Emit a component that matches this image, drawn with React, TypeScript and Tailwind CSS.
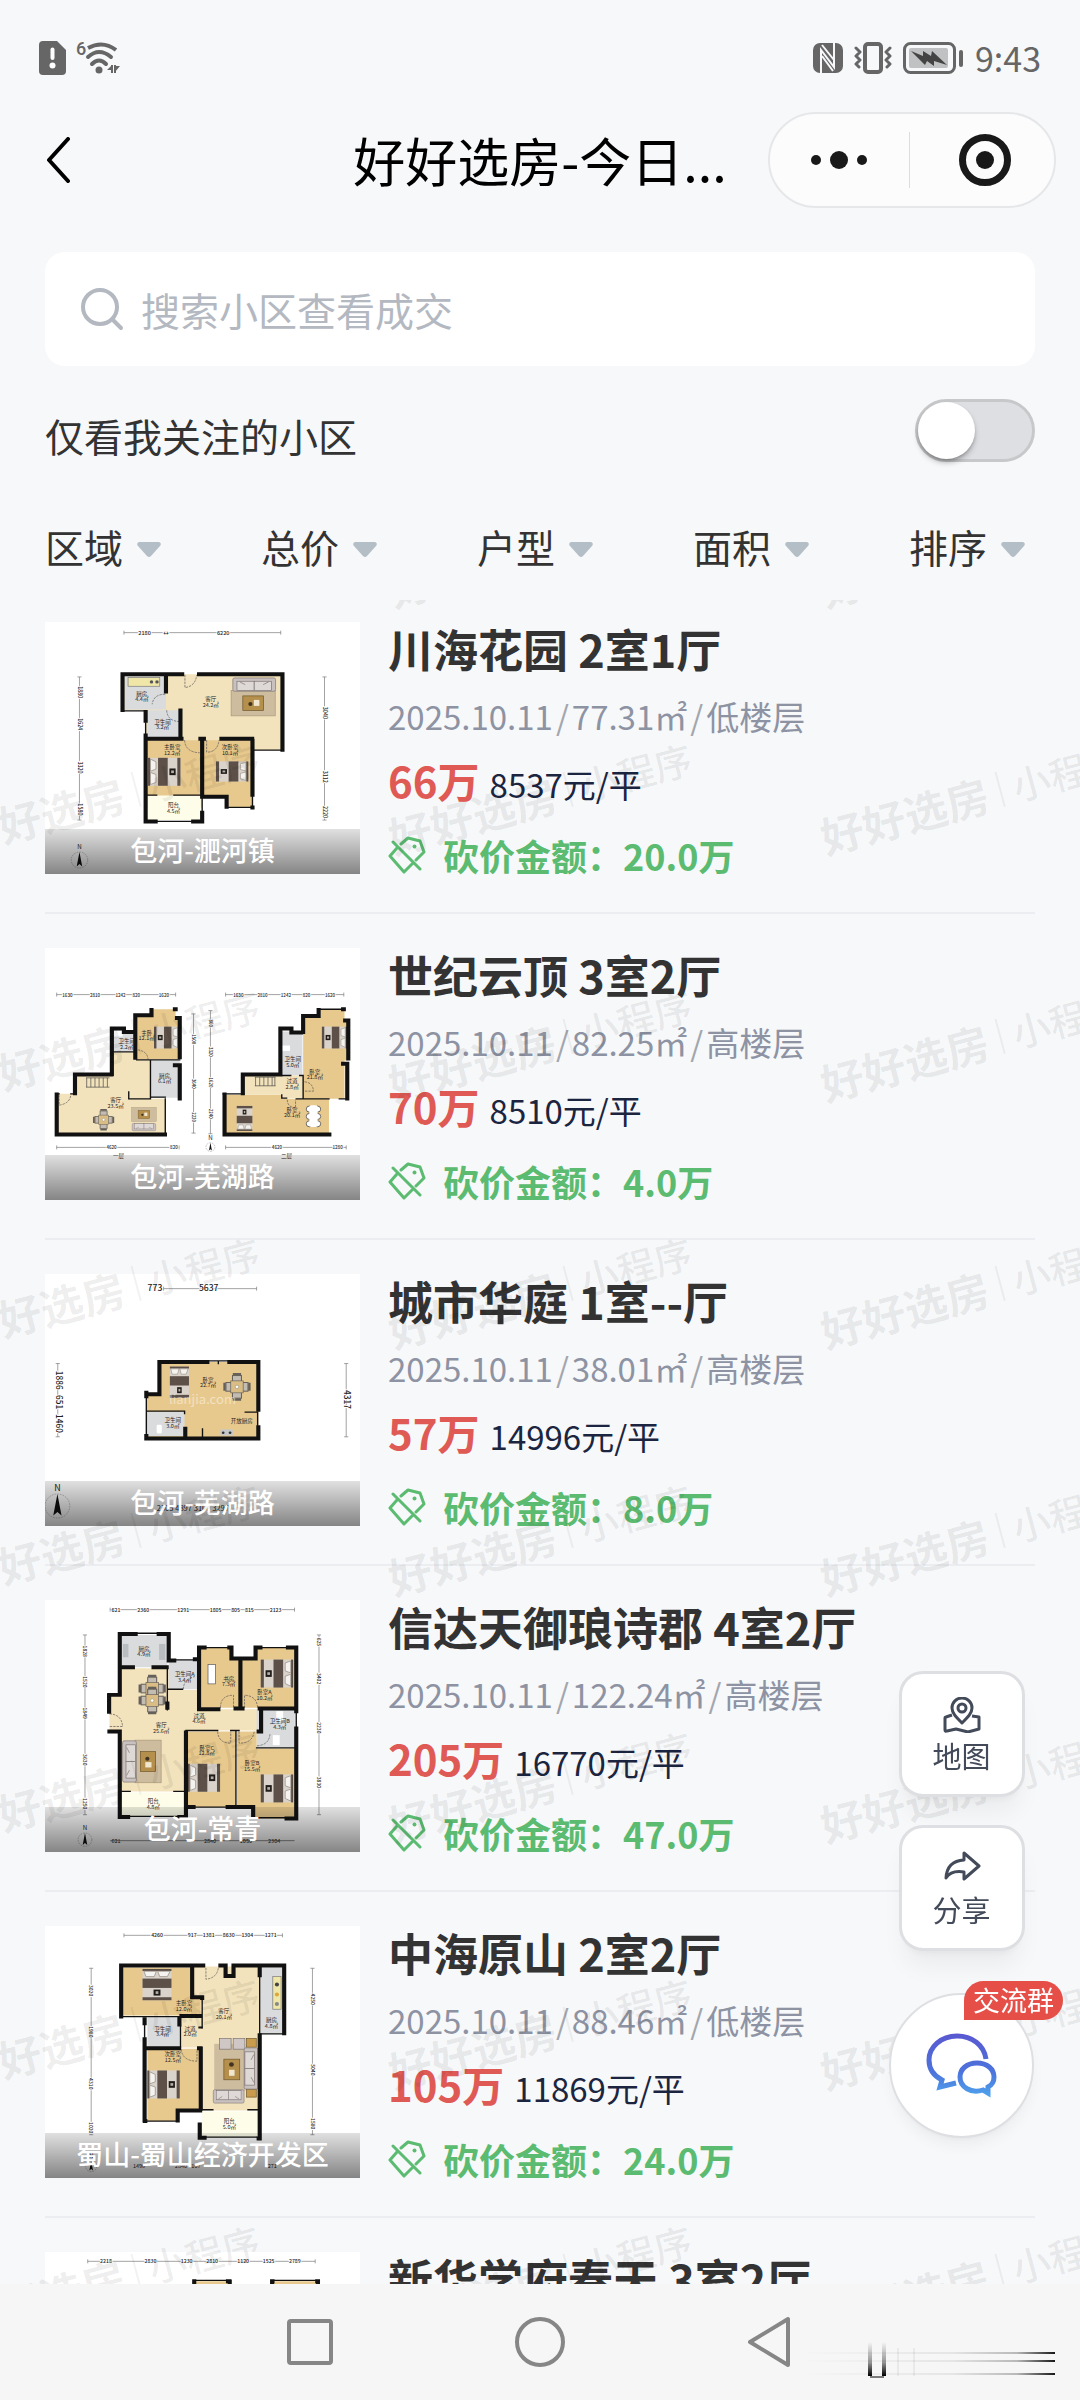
import { useState } from "react";
import type { ReactNode } from "react";

interface Listing {
  name: string;
  layout: string;
  date: string;
  size: string;
  floor: string;
  total: string;
  unit: string;
  cut: string;
  district: string;
  plan: ReactNode;
}

const WOOD = "#e8c98d";
const TILE = "#f3e3bc";
const STONE = "#d9dbdd";
const BALCONY = "#fdfdea";
const WALL = "#111111";

function Plan({ viewBox, children }: { viewBox: string; children: ReactNode }) {
  return (
    <svg
      viewBox={viewBox}
      preserveAspectRatio="none"
      className="block h-full w-full"
      fontFamily="'Noto Sans CJK SC', sans-serif"
      fontSize="16"
      textAnchor="middle"
      fill="#222222"
    >
      {children}
    </svg>
  );
}

function Walls({ thick, thin }: { thick: string; thin?: string }) {
  return (
    <g fill="none" stroke={WALL} strokeLinecap="square">
      {thin && <path d={thin} strokeWidth="4" />}
      <path d={thick} strokeWidth="12" strokeLinecap="butt" />
    </g>
  );
}

function Label({ x, y, name, area }: { x: number; y: number; name: string; area?: string }) {
  return (
    <>
      <text x={x} y={y}>{name}</text>
      {area && <text x={x} y={y + 17}>{area}</text>}
    </>
  );
}

// Bed drawn with its head to the left, 94 x 84, turned around its centre
function Bed({ x, y, turn = 0 }: { x: number; y: number; turn?: number }) {
  return (
    <g transform={`translate(${x} ${y}) rotate(${turn})`}>
      <rect x="-47" y="-42" width="94" height="84" fill="#d9d3cb" />
      <rect x="-47" y="-42" width="6" height="84" fill="#5b4e45" />
      <path d="M-40 -38 L-24 -30 L-24 -8 L-40 -2 Z M-40 2 L-24 8 L-24 32 L-40 38 Z" fill="#f5f3ef" stroke="#8d857c" strokeWidth="2" />
      <rect x="-18" y="-42" width="28" height="84" fill="#5c5048" />
      <rect x="38" y="-42" width="9" height="84" fill="#5c5048" />
      <rect x="15" y="-10" width="18" height="20" fill="#1f1c1a" />
      <rect x="20" y="-4" width="8" height="8" fill="#b8b0a5" />
    </g>
  );
}

// Sofa with its back at the top
function Sofa({ x, y, turn = 0 }: { x: number; y: number; turn?: number }) {
  return (
    <g transform={`translate(${x} ${y}) rotate(${turn})`} stroke="#7b7270" strokeWidth="2">
      <rect x="-62" y="-20" width="124" height="40" rx="5" fill="#c9c1c0" />
      <rect x="-50" y="-10" width="50" height="28" fill="#ded8d6" />
      <rect x="0" y="-10" width="50" height="28" fill="#ded8d6" />
      <path d="M-42 -8 L-26 0 M42 -8 L26 0" />
    </g>
  );
}

function CoffeeTable({ x, y, turn = 0 }: { x: number; y: number; turn?: number }) {
  return (
    <g transform={`translate(${x} ${y}) rotate(${turn})`}>
      <rect x="-64" y="-38" width="128" height="76" fill="#cdbc9e" stroke="#a8967a" strokeWidth="2" />
      <rect x="-30" y="-22" width="60" height="44" fill="#b58f4c" stroke="#6d5429" strokeWidth="2" />
      <rect x="2" y="-10" width="16" height="18" fill="#f1e7d1" />
      <circle cx="-8" cy="2" r="6" fill="#403322" />
    </g>
  );
}

function DiningTable({ x, y }: { x: number; y: number }) {
  return (
    <g transform={`translate(${x} ${y})`} stroke="#66605a" strokeWidth="3">
      <path d="M-12 -38 H12 M-12 38 H12 M-36 -12 V12 M36 -12 V12" strokeWidth="7" />
      <rect x="-13" y="-34" width="26" height="68" fill="#c3bcb2" />
      <rect x="-32" y="-13" width="64" height="26" fill="#c3bcb2" />
      <rect x="-18" y="-18" width="36" height="36" fill="#d9bd84" strokeWidth="2" />
      <circle r="5" fill="#ffffff" strokeWidth="1" />
    </g>
  );
}

function Compass({ x, y, r = 24 }: { x: number; y: number; r?: number }) {
  return (
    <g transform={`translate(${x} ${y})`}>
      <circle r={r} fill="none" stroke="#555555" strokeWidth="1" strokeDasharray="5 3" />
      <path d={`M0 ${-r} L${r / 3} ${r * 0.8} L0 ${r / 2} L${-r / 3} ${r * 0.8} Z`} fill={WALL} />
      <text y={-r - 8} fontSize={r > 30 ? 26 : 18}>N</text>
    </g>
  );
}

interface DimensionProps {
  at: number;
  from: number;
  to: number;
  marks: [number, string][];
  vertical?: boolean;
  size?: number;
}

function Dimension({ at, from, to, marks, vertical, size = 16 }: DimensionProps) {
  return (
    <g fontSize={size} fontWeight="500">
      <path
        d={
          vertical
            ? `M${at} ${from} V${to} M${at - 6} ${from} h12 M${at - 6} ${to} h12`
            : `M${from} ${at} H${to} M${from} ${at - 6} v12 M${to} ${at - 6} v12`
        }
        stroke="#777777"
        strokeWidth="2"
      />
      {marks.map(([pos, value]) => (
        <text
          key={pos}
          stroke="#ffffff"
          strokeWidth="5"
          paintOrder="stroke"
          transform={
            vertical ? `translate(${at - 5} ${pos}) rotate(90)` : `translate(${pos} ${at + 6})`
          }
        >
          {value}
        </text>
      ))}
    </g>
  );
}

const planChuanhai = (
  <Plan viewBox="131 65 914 757">
    <path d="M356 222 H820 V450 H733 V622 H423 V329 H356 Z" fill={TILE} />
    <path d="M587 590 H660 V630 H587 Z" fill="#ffffff" />
    <path d="M362 228 H482 V328 H362 Z M428 330 H524 V416 H428 Z" fill={STONE} />
    <path d="M428 420 H583 V585 H428 Z M590 420 H733 V620 H663 V588 H590 Z" fill={WOOD} />
    <path d="M428 588 H583 V660 H428 Z" fill={BALCONY} />
    <rect x="372" y="232" width="92" height="26" fill="#efe6a8" stroke="#777777" strokeWidth="2" />
    <circle cx="440" cy="245" r="5" fill="#555555" />
    <circle cx="456" cy="245" r="5" fill="#555555" />
    <path d="M537 224 V262 Q568 258 571 224 M480 282 Q446 282 442 312 M484 330 Q486 362 520 364 M536 420 Q538 456 580 458 M600 420 V456 Q632 456 636 420" fill="none" stroke="#555555" strokeWidth="2" strokeDasharray="7 3" />
    <CoffeeTable x={735} y={309} />
    <Sofa x={738} y={253} />
    <Bed x={477} y={515} />
    <g transform="translate(674 514) scale(1 0.72)"><Bed x={0} y={0} turn={180} /></g>
    <Walls
      thick="M356 335 V222 H535 M572 222 H820 V455 M482 222 V280 M423 329 V368 M423 400 V664 H458 M555 664 H587 V632 M524 325 V416 M423 416 H533 M576 416 H598 M637 416 H738 M733 416 V590 M587 416 V590 H658 V626 M727 622 H739"
      thin="M356 332 H423 M423 368 V400 M733 450 H820 M660 622 H733 V590 M458 664 H555 M428 585 H455 M505 585 H583 M587 590 V632"
    />
    <Label x={412} y={286} name="厨房" area="4.4㎡" />
    <Label x={472} y={370} name="卫生间" area="3.2㎡" />
    <Label x={612} y={302} name="客厅" area="24.2㎡" />
    <Label x={500} y={448} name="主卧室" area="12.2㎡" />
    <Label x={668} y={448} name="次卧室" area="10.1㎡" />
    <Label x={504} y={622} name="阳台" area="4.5㎡" />
    <Dimension at={97} from={360} to={815} marks={[[420, "2180"], [482, "↔"], [648, "6220"]]} />
    <Dimension at={231} from={230} to={660} marks={[[276, "1880"], [372, "1624"], [502, "3320"], [628, "1580"]]} vertical />
    <Dimension at={942} from={230} to={660} marks={[[338, "3040"], [530, "3112"], [636, "2220"]]} vertical />
    <Compass x={231} y={780} />
  </Plan>
);

const planShiji = (
  <Plan viewBox="131 52 914 757">
    <path d="M165 490 H218 V432 H325 V365 H395 V388 H437 V505 H480 V612 H165 Z" fill={TILE} />
    <path d="M328 298 H393 V362 H328 Z M437 390 H522 V502 H437 Z M818 303 H878 V435 H818 Z" fill={STONE} />
    <path d="M397 258 H440 V236 H510 V262 H522 V386 H397 Z" fill={WOOD} />
    <path d="M880 260 H930 V236 H1000 V265 H1010 V390 H1000 V505 H880 Z" fill={WOOD} />
    <path d="M652 493 H820 V505 H955 V612 H652 Z" fill={WOOD} />
    <path d="M708 435 H880 V503 H822 V493 H708 Z" fill={TILE} />
    <path d="M252 442 V470 M264 442 V470 M276 442 V470 M288 442 V470 M300 442 V470 M312 442 V470 M250 442 H318 M250 470 H318 M742 440 V466 M754 440 V466 M766 440 V466 M778 440 V466 M790 440 V466 M798 440 V466 M740 440 H800 M740 466 H800" stroke="#444444" strokeWidth="2" />
    <path d="M172 494 V524 Q202 520 206 494 M400 358 Q428 362 430 386 M884 454 Q908 456 910 482 H884 M834 508 Q834 530 858 532 V508" fill="none" stroke="#555555" strokeWidth="2" strokeDasharray="7 3" />
    <rect x="818" y="345" width="24" height="16" fill="#ffffff" />
    <rect x="330" y="300" width="26" height="18" fill="#ffffff" />
    <g transform="translate(484 321) scale(0.78)"><Bed x={0} y={0} turn={180} /></g>
    <g transform="translate(971 321) scale(0.78)"><Bed x={0} y={0} turn={180} /></g>
    <g transform="translate(710 564) scale(0.54 0.8)"><Bed x={0} y={0} turn={270} /></g>
    <g transform="translate(301 568) scale(0.78)"><DiningTable x={0} y={0} /></g>
    <g transform="translate(418 552) scale(0.56)"><CoffeeTable x={0} y={0} /></g>
    <g transform="translate(418 590) scale(0.55)"><Sofa x={0} y={0} turn={180} /></g>
    <g fill="#ffffff" stroke="#333333" strokeWidth="2">
      <circle cx="898" cy="536" r="9" />
      <circle cx="898" cy="558" r="9" />
      <circle cx="898" cy="580" r="9" />
      <circle cx="922" cy="536" r="9" />
      <circle cx="922" cy="558" r="9" />
      <circle cx="922" cy="580" r="9" />
      <rect x="898" y="524" width="24" height="66" rx="6" stroke="none" />
    </g>
    <Walls
      thick="M165 486 V612 H485 M218 494 V432 H328 M325 437 V294 H360 V304 H398 M393 388 V254 H440 V232 M502 236 H516 M508 262 H522 V386 M502 404 H522 V510"
      thin="M165 490 H172 M206 490 H218 M328 364 H393 M397 388 H522 M437 390 V505 M374 484 V505 H437 M437 500 H480 M480 505 V610"
    />
    <Walls
      thick="M652 486 V612 H962 M705 494 V432 H820 M814 437 V294 H846 V306 H880 M880 310 V256 H925 V232 M990 236 H1004 M996 270 H1011 V390 M990 400 H1008 V510"
      thin="M648 490 H708 M820 435 H844 M870 435 H880 V503 M818 493 V503 H832 M860 505 H955 M925 236 H996 M1010 505 H985"
    />
    <Label x={426} y={312} name="主卧" area="12.1㎡" />
    <Label x={368} y={338} name="卫生间" area="2.2㎡" />
    <Label x={478} y={442} name="厨房" area="6.1㎡" />
    <Label x={336} y={516} name="客厅" area="23.5㎡" />
    <Label x={850} y={392} name="卫生间" area="5.0㎡" />
    <Label x={914} y={430} name="卧室" area="21.8㎡" />
    <Label x={848} y={458} name="过道" area="2.8㎡" />
    <Label x={848} y={544} name="卧室" area="20.1㎡" />
    <Label x={344} y={682} name="一层" />
    <Label x={832} y={682} name="二层" />
    <Dimension at={192} from={165} to={510} marks={[[196, "1630"], [276, "2810"], [350, "1242"], [396, "820"], [476, "1620"]]} size={13} />
    <Dimension at={192} from={655} to={998} marks={[[692, "1630"], [762, "2810"], [830, "1242"], [890, "820"], [958, "1620"]]} size={13} />
    <Dimension at={562} from={250} to={608} marks={[[326, "1500"], [460, "3640"], [560, "2220"]]} size={13} vertical />
    <Dimension at={611} from={240} to={610} marks={[[278, "860"], [364, "3320"], [456, "1620"], [550, "2240"]]} size={13} vertical />
    <Dimension at={651} from={165} to={520} marks={[[324, "4620"], [505, "820"]]} size={13} />
    <Dimension at={651} from={655} to={1005} marks={[[804, "4620"], [980, "1280"]]} size={13} />
    <Compass x={611} y={650} r={13} />
  </Plan>
);

const planChengshi = (
  <Plan viewBox="131 71 914 757">
    <path d="M463 335 H750 V565 H425 V432 H463 Z" fill={WOOD} />
    <path d="M428 485 H536 V558 H428 Z" fill={STONE} />
    <rect x="455" y="524" width="15" height="26" rx="4" fill="#ffffff" />
    <g transform="translate(521 396) scale(0.66 1)"><Bed x={0} y={0} turn={90} /></g>
    <DiningTable x={688} y={410} />
    <rect x="640" y="538" width="36" height="18" fill="#c5c9cc" />
    <circle cx="648" cy="548" r="4" fill="#333333" />
    <circle cx="668" cy="548" r="4" fill="#333333" />
    <Walls
      thick="M463 437 V335 H608 M660 335 H750 V485 M750 525 V565 H419 M425 422 V444 M425 552 V570 M419 432 H469 M538 530 V560"
      thin="M608 332 H660 M634 332 V340 M425 444 V552 M425 483 H536 M536 483 V490 M588 536 V560 M712 486 H748 V525"
    />
    <text x="588" y="462" fontSize="38" fill="#ffffff" opacity="0.45">lianjia.com</text>
    <Label x={604} y={394} name="卧室" area="22.7㎡" />
    <Label x={502} y={516} name="卫生间" area="3.0㎡" />
    <Label x={702} y={519} name="开放厨房" />
    <Dimension at={115} from={475} to={745} marks={[[450, "773"], [606, "5637"]]} size={25} />
    <Dimension at={168} from={340} to={560} marks={[[390, "1886"], [456, "651"], [520, "1460"]]} size={25} vertical />
    <Dimension at={1005} from={340} to={560} marks={[[448, "4317"]]} size={25} vertical />
    <Compass x={167} y={768} r={36} />
    <text x="560" y="783" fontSize="22">2305 4897 3100 3297</text>
  </Plan>
);

const planXinda = (
  <Plan viewBox="131 60 914 757">
    <path d="M354 265 H490 V330 H575 V388 H760 V452 H540 V635 H354 V455 H318 V345 H354 Z" fill={TILE} />
    <path d="M354 165 H486 V262 H354 Z M490 240 H577 V328 H490 Z M745 390 H856 V504 H745 Z" fill={STONE} />
    <path d="M583 203 H672 V236 H697 V384 H583 Z M702 238 H745 V203 H857 V384 H702 Z" fill={WOOD} />
    <path d="M543 455 H684 V682 H543 Z M688 455 H745 V506 H857 V716 H738 V682 H688 Z" fill={WOOD} />
    <path d="M354 638 H538 V710 H354 Z" fill={BALCONY} />
    <path d="M318 402 Q354 404 356 440 H318 M640 384 Q640 346 678 346 V384 M710 384 V346 Q746 348 748 384 M632 455 Q634 490 670 490 V455 M694 455 V490 Q734 490 738 455 M746 498 Q782 496 784 460 M532 328 Q534 296 566 290" fill="none" stroke="#555555" strokeWidth="2" strokeDasharray="7 3" />
    <rect x="357" y="192" width="16" height="40" fill="#b9bdc0" />
    <rect x="462" y="192" width="18" height="48" fill="#b9bdc0" />
    <rect x="802" y="394" width="20" height="30" fill="#ffffff" />
    <rect x="792" y="466" width="20" height="30" fill="#ffffff" />
    <rect x="604" y="254" width="22" height="58" fill="#ffffff" stroke="#555555" strokeWidth="2" />
    <DiningTable x={442} y={326} />
    <DiningTable x={442} y={362} />
    <CoffeeTable x={430} y={545} turn={90} />
    <Sofa x={376} y={545} turn={270} />
    <Bed x={592} y={594} />
    <Bed x={804} y={281} turn={180} />
    <Bed x={804} y={626} turn={180} />
    <Walls
      thick="M312 345 H348 V162 H400 M455 162 H490 V242 H512 M560 238 H578 V388 H640 M317 340 V402 M312 455 H354 M348 450 V712 H378 M348 262 H392 M440 262 H490 M578 238 V203 H600 M660 203 H672 V236 H742 V203 H762 M830 203 H860 V400 M860 440 V716 H826 M698 236 V384 M678 386 H710 M748 386 H860 M758 386 V455 H745 M486 365 V390 M540 452 V712 H515 M540 682 H568 M655 682 H735 V716"
      thin="M400 160 H455 M486 262 V390 M490 328 H530 M577 328 V388 M512 240 H560 M600 203 H660 M762 203 H830 M540 452 H632 M670 452 H694 M685 452 V682 M745 504 H856 M354 635 H378 M505 635 H538 M378 710 H515 M568 682 H655 M740 714 H826 M860 400 V440"
    />
    <Label x={418} y={212} name="厨房" area="4.9㎡" />
    <Label x={536} y={288} name="卫生间A" area="3.4㎡" />
    <Label x={664} y={302} name="书房" area="7.3㎡" />
    <Label x={768} y={342} name="卧室A" area="10.2㎡" />
    <Label x={578} y={414} name="过道" area="4.6㎡" />
    <Label x={468} y={442} name="客厅" area="25.6㎡" />
    <Label x={812} y={430} name="卫生间B" area="4.3㎡" />
    <Label x={600} y={510} name="卧室C" area="12.8㎡" />
    <Label x={732} y={556} name="卧室B" area="15.5㎡" />
    <Label x={445} y={670} name="阳台" area="4.8㎡" />
    <Dimension at={89} from={320} to={855} marks={[[337, "621"], [416, "2360"], [532, "1291"], [626, "1805"], [684, "805"], [724, "815"], [800, "2123"]]} size={15} />
    <Dimension at={247} from={165} to={705} marks={[[214, "1828"], [306, "1520"], [400, "1849"], [540, "3630"], [672, "1250"]]} size={15} vertical />
    <Dimension at={926} from={165} to={705} marks={[[186, "625"], [296, "3402"], [444, "2230"], [608, "3830"]]} size={15} vertical />
    <Compass x={247} y={780} r={20} />
    <path d="M320 783 H855" stroke="#555555" strokeWidth="2" />
    <text x="337" y="789">621</text>
    <text x="610" y="789">2840</text>
    <text x="714" y="789">1050</text>
    <text x="796" y="789">2304</text>
  </Plan>
);

const planZhonghai = (
  <Plan viewBox="131 78 914 757">
    <path d="M562 200 H752 V632 H587 V443 H524 V350 H587 V290 H562 Z" fill={TILE} />
    <path d="M357 203 H558 V292 H583 V347 H357 Z M428 447 H582 V632 H520 V664 H428 Z" fill={WOOD} />
    <path d="M428 352 H521 V442 H428 Z M757 203 H822 V402 H757 Z" fill={STONE} />
    <path d="M587 635 H752 V712 H587 Z" fill={BALCONY} />
    <path d="M598 204 V238 Q630 234 634 204 M526 448 Q530 484 572 484 V448" fill="none" stroke="#555555" strokeWidth="2" strokeDasharray="7 3" />
    <rect x="792" y="230" width="24" height="98" fill="#efe6a8" stroke="#777777" strokeWidth="2" />
    <circle cx="804" cy="254" r="6" fill="#444444" />
    <circle cx="804" cy="284" r="6" fill="#d8a83a" />
    <circle cx="804" cy="312" r="6" fill="#888888" />
    <Bed x={456} y={254} turn={90} />
    <Bed x={475} y={554} />
    <rect x="622" y="432" width="90" height="142" fill="#cdbc9e" />
    <rect x="650" y="478" width="46" height="62" fill="#b58f4c" stroke="#6d5429" strokeWidth="2" />
    <rect x="665" y="510" width="16" height="18" fill="#f1e7d1" />
    <circle cx="672" cy="494" r="7" fill="#403322" />
    <rect x="637" y="416" width="34" height="32" fill="#cfc7c6" stroke="#7b7270" strokeWidth="2" />
    <rect x="677" y="416" width="34" height="32" fill="#cfc7c6" stroke="#7b7270" strokeWidth="2" />
    <rect x="716" y="416" width="28" height="26" fill="#c99c4d" stroke="#6d5429" strokeWidth="2" />
    <rect x="716" y="568" width="28" height="24" fill="#c99c4d" stroke="#6d5429" strokeWidth="2" />
    <Sofa x={729} y={506} turn={90} />
    <g transform="translate(664 590) scale(0.72 1)"><Sofa x={0} y={0} turn={180} /></g>
    <Walls
      thick="M352 356 V197 H596 M634 197 H655 V228 H678 V197 H825 V406 M558 197 V292 H587 V300 M420 352 V376 M420 412 V668 M415 664 H428 M516 668 V632 H587 M521 348 V380 M582 380 V386 M420 445 H526 M572 445 H587 M583 440 V632 M754 400 V716 H745 M580 668 V714 H600 M754 200 V232 M521 348 H587"
      thin="M357 350 H521 M420 376 V412 M587 300 V384 M524 380 V443 M754 230 V400 M757 402 H822 M587 630 H618 M720 630 H750 M600 712 H745 M428 664 H516"
    />
    <Label x={534} y={316} name="主卧室" area="12.0㎡" />
    <Label x={650} y={340} name="客厅" area="20.1㎡" />
    <Label x={788} y={366} name="厨房" area="4.8㎡" />
    <Label x={472} y={392} name="卫生间" area="3.4㎡" />
    <Label x={552} y={392} name="过道" area="2.0㎡" />
    <Label x={502} y={470} name="次卧室" area="12.5㎡" />
    <Label x={666} y={670} name="阳台" area="5.0㎡" />
    <Dimension at={106} from={360} to={820} marks={[[456, "4260"], [558, "917"], [606, "1381"], [664, "8630"], [718, "1304"], [786, "1271"]]} size={15} />
    <Dimension at={265} from={205} to={705} marks={[[272, "3020"], [396, "1980"], [552, "4310"], [684, "1020"]]} size={15} vertical />
    <Dimension at={907} from={205} to={705} marks={[[298, "4250"], [510, "5040"], [672, "1580"]]} size={15} vertical />
    <Compass x={265} y={800} r={16} />
    <text x="404" y="804">1496</text>
    <text x="545" y="804">2840 1107</text>
    <text x="786" y="804">1271</text>
  </Plan>
);

const planXinhua = (
  <Plan viewBox="131 1055 914 757">
    <path d="M565 1143 H668 V1400 H565 Z M790 1143 H924 V1400 H790 Z" fill={WOOD} />
    <Walls
      thick="M558 1143 H570 M656 1143 H672 M784 1143 H797 M915 1143 H929 M564 1138 V1400 M667 1138 V1400 M790 1138 V1400 M923 1138 V1400"
      thin="M570 1140 H656 M797 1140 H915"
    />
    <Dimension at={1083} from={255} to={915} marks={[[308, "2218"], [437, "2830"], [542, "1230"], [616, "2810"], [706, "1120"], [780, "1525"], [856, "2789"]]} size={15} />
  </Plan>
);

const listings: Listing[] = [
  { name: "川海花园", layout: "2室1厅", date: "2025.10.11", size: "77.31㎡", floor: "低楼层", total: "66万", unit: "8537元/平", cut: "20.0万", district: "包河-淝河镇", plan: planChuanhai },
  { name: "世纪云顶", layout: "3室2厅", date: "2025.10.11", size: "82.25㎡", floor: "高楼层", total: "70万", unit: "8510元/平", cut: "4.0万", district: "包河-芜湖路", plan: planShiji },
  { name: "城市华庭", layout: "1室--厅", date: "2025.10.11", size: "38.01㎡", floor: "高楼层", total: "57万", unit: "14996元/平", cut: "8.0万", district: "包河-芜湖路", plan: planChengshi },
  { name: "信达天御琅诗郡", layout: "4室2厅", date: "2025.10.11", size: "122.24㎡", floor: "高楼层", total: "205万", unit: "16770元/平", cut: "47.0万", district: "包河-常青", plan: planXinda },
  { name: "中海原山", layout: "2室2厅", date: "2025.10.11", size: "88.46㎡", floor: "低楼层", total: "105万", unit: "11869元/平", cut: "24.0万", district: "蜀山-蜀山经济开发区", plan: planZhonghai },
  { name: "新华学府春天", layout: "3室2厅", date: "2025.10.11", size: "96.50㎡", floor: "中楼层", total: "158万", unit: "16373元/平", cut: "10.0万", district: "包河-常青", plan: planXinhua },
];

const filters = ["区域", "总价", "户型", "面积", "排序"];

function StatusBar() {
  return (
    <div className="flex h-28 items-center justify-between px-[39px] pt-1 text-[#666666]">
      <div className="flex items-center gap-2.5">
        <svg width="27" height="34" viewBox="0 0 27 34">
          <path d="M4 0 H18 L27 9 V30 a4 4 0 0 1 -4 4 H4 a4 4 0 0 1 -4 -4 V4 a4 4 0 0 1 4 -4 Z" fill="currentColor" />
          <path d="M13.500 8.500 V17" stroke="#ffffff" strokeWidth="4" strokeLinecap="round" />
          <circle cx="13.500" cy="24.500" r="3" fill="#ffffff" />
        </svg>
        <svg width="44" height="34" viewBox="0 0 44 34" fill="none" stroke="currentColor">
          <text x="0" y="14" fontSize="18" fontFamily="Roboto, sans-serif" fontWeight="500" fill="currentColor" stroke="none">6</text>
          <path d="M12 7 Q27 -1 40 9" strokeWidth="4" />
          <path d="M12 16 Q23 6 35 16 M16 23 Q23 16 30 23" strokeWidth="4" strokeLinecap="round" />
          <circle cx="23" cy="29" r="3.500" fill="currentColor" stroke="none" />
          <path d="M36 24 V32 M39 24 V32" strokeWidth="2" />
          <path d="M36 24 L31 29 H36 Z M39 25 H44 L39 31 Z" fill="currentColor" stroke="none" />
        </svg>
      </div>
      <div className="flex items-center">
        <svg width="30" height="30" viewBox="0 0 30 30">
          <rect width="30" height="30" rx="7" fill="currentColor" />
          <path d="M8 30 V7 L21 24 V0 M9 2 L21 17 M9 13 L20 28" fill="none" stroke="#f7f8fa" strokeWidth="2" />
        </svg>
        <svg width="38" height="32" viewBox="0 0 38 32" className="ml-[11px]" fill="none" stroke="currentColor" strokeLinecap="round" strokeLinejoin="round">
          <rect x="11" y="2" width="16" height="28" rx="3" strokeWidth="4" />
          <path d="M2 6 L6 10 L2 14 L6 18 L2 22 L5 25 M36 6 L32 10 L36 14 L32 18 L36 22 L33 25" strokeWidth="3" />
        </svg>
        <svg width="60" height="32" viewBox="0 0 60 32" className="ml-[11px]">
          <rect x="1.500" y="1.500" width="50" height="29" rx="6" fill="none" stroke="currentColor" strokeWidth="3" />
          <rect x="6" y="6" width="39" height="20" rx="2" fill="#bfc1c2" />
          <path d="M8 9 L20 14 L20 9 L28 14 L29 9 L44 23 L31 19 L31 24 L24 19 L22 23 Z" fill="#444444" />
          <rect x="56" y="8" width="4" height="17" rx="2" fill="currentColor" />
        </svg>
        <time className="ml-3 text-[34px] leading-9">9:43</time>
      </div>
    </div>
  );
}

function Header() {
  return (
    <header className="grid h-24 grid-cols-[288px_1fr_288px] items-center px-6">
      <button type="button" aria-label="返回" className="w-12 pl-[22px]">
        <svg width="24" height="46" viewBox="0 0 24 46" fill="none" stroke="#000000" strokeWidth="4" strokeLinecap="round" strokeLinejoin="round">
          <path d="M22 2 L3 23 L22 44" />
        </svg>
      </button>
      <h1 className="text-center text-[52px] leading-[64px] whitespace-nowrap text-black">
        好好选房-今日...
      </h1>
      <div className="flex h-24 items-center rounded-full border-2 border-[#e6e7e9] bg-[#fcfcfd]">
        <button type="button" aria-label="更多" className="flex flex-1 items-center justify-center gap-[9px]">
          <span className="size-2.5 rounded-full bg-[#191919]" />
          <span className="size-[18px] rounded-full bg-[#191919]" />
          <span className="size-2.5 rounded-full bg-[#191919]" />
        </button>
        <span className="h-14 w-px bg-[#dcdddf]" />
        <button type="button" aria-label="关闭" className="flex flex-1 justify-center pl-1.5">
          <span className="flex size-[52px] items-center justify-center rounded-full border-7 border-[#191919]">
            <span className="size-[18px] rounded-full bg-[#191919]" />
          </span>
        </button>
      </div>
    </header>
  );
}

function Watermark() {
  return (
    <div
      aria-hidden="true"
      className="pointer-events-none absolute -top-[174px] -left-[108px] grid auto-rows-[247px] grid-cols-[repeat(3,432px)] text-black/7 select-none"
    >
      {Array.from({ length: 24 }, (_, i) => (
        <div key={i} className="flex -rotate-15 items-center justify-center whitespace-nowrap">
          <span className="text-[43px] font-bold">好好选房</span>
          <span className="mx-3 h-9 w-0.5 bg-black/5" />
          <span className="text-[38px] font-medium">小程序</span>
        </div>
      ))}
    </div>
  );
}

function ListingCard({ item }: { item: Listing }) {
  return (
    <li className="flex gap-7 border-b-2 border-[#ebedf0] pt-[34px] pb-[38px] first:pt-[22px]">
      <figure className="relative h-[252px] w-[315px] shrink-0 bg-white">
        {item.plan}
        <figcaption className="absolute inset-x-0 bottom-0 h-[45px] bg-linear-to-b from-black/12 to-black/48 text-center text-[27px] leading-[42px] font-medium text-white">
          {item.district}
        </figcaption>
      </figure>
      <div className="min-w-0 whitespace-nowrap">
        <h2 className="text-[45px] leading-[54px] font-bold text-[#333333]">
          {item.name} {item.layout}
        </h2>
        <p className="mt-4 flex gap-[3px] text-[33px] leading-[48px] text-[#8d93a3]">
          <span>{item.date}</span>
          <span className="text-[#a3a6ad]">/</span>
          <span>{item.size}</span>
          <span className="text-[#a3a6ad]">/</span>
          <span>{item.floor}</span>
        </p>
        <p className="mt-4 flex h-12 items-baseline gap-2.5 leading-[48px]">
          <strong className="text-[42px] font-bold text-[#e05a55]">{item.total}</strong>
          <span className="text-[33px] text-[#1b2540]">{item.unit}</span>
        </p>
        <p className="mt-8 flex h-[38px] items-center gap-[17px] text-[36px] leading-[38px] font-bold text-[#5bbb70]">
          <svg width="38" height="38" viewBox="0 0 38 38" fill="none" stroke="currentColor" strokeWidth="3" strokeLinecap="round" strokeLinejoin="round">
            <path d="M13 8 L20 2 L32 5 L36 16 L28 24 M9 12 L2 20 L16 36 L24 28 M5 6 L32 33" />
            <circle cx="26.500" cy="10.500" r="2" fill="currentColor" stroke="none" />
          </svg>
          <span>砍价金额：{item.cut}</span>
        </p>
      </div>
    </li>
  );
}

function FloatingActions() {
  const box =
    "flex size-[126px] flex-col items-center rounded-3xl border-3 border-[#dedfe2] bg-white pt-[23px] text-[29px] leading-9 text-[#434a59] shadow-xl shadow-black/5";

  return (
    <div className="fixed right-[46px] bottom-[262px] flex flex-col items-center">
      <button type="button" className={box}>
        <svg width="38" height="36" viewBox="0 0 38 36" fill="none" stroke="currentColor" strokeWidth="3" strokeLinejoin="round">
          <path d="M19 26 C13 20 9 16 9 11 A10 10 0 0 1 29 11 C29 16 25 20 19 26 Z" />
          <circle cx="19" cy="11" r="4" />
          <path d="M9 18 L3 20 Q2 20 2 21 V33 Q2 35 4 34 L13 32 L25 35 L36 32 V20 L29 19" />
        </svg>
        <span className="mt-1">地图</span>
      </button>
      <button type="button" className={`${box} mt-7`}>
        <svg width="38" height="32" viewBox="0 0 38 32" fill="none" stroke="currentColor" strokeWidth="3" strokeLinejoin="round">
          <path d="M21 2 L36 15 L21 28 V21 Q8 19 3 27 Q4 10 21 9 Z" />
        </svg>
        <span className="mt-2">分享</span>
      </button>
      <button
        type="button"
        aria-label="交流群"
        className="relative mt-[42px] flex size-[145px] items-center justify-center rounded-full border-2 border-[#dedfe2] bg-white shadow-lg shadow-black/5"
      >
        <svg width="72" height="66" viewBox="0 0 72 66" fill="none" stroke="url(#chat)" strokeWidth="5">
          <defs>
            <linearGradient id="chat" x1="0" y1="0" x2="0" y2="66" gradientUnits="userSpaceOnUse">
              <stop offset="0" stopColor="#5a58d0" />
              <stop offset="0.600" stopColor="#4c74dc" />
              <stop offset="1" stopColor="#4fa8ee" />
            </linearGradient>
          </defs>
          <path d="M60 26 C58 12 46 3 31 3 C15 3 3 14 3 27 C3 36 8 43 16 47 L14 54 L30 50" />
          <path d="M57 57 C45 61 34 54 34 44 C34 36 41 30 51 30 C61 30 68 36 68 44 C68 48 66 52 62 54 L62 60 Z" />
        </svg>
        <span className="absolute -top-3.5 -right-[31px] h-[39px] rounded-full rounded-bl-none bg-[#e64f48] px-[9px] text-[27px] leading-[37px] text-white">
          交流群
        </span>
      </button>
    </div>
  );
}

function SystemNav() {
  return (
    <nav className="relative z-10 flex h-[116px] shrink-0 items-center justify-center gap-[182px] bg-[#f6f6f7]">
      <button type="button" aria-label="最近任务">
        <span className="block size-[46px] rounded-sm border-4 border-[#868686]" />
      </button>
      <button type="button" aria-label="主屏幕">
        <span className="block size-[50px] rounded-full border-4 border-[#868686]" />
      </button>
      <button type="button" aria-label="返回">
        <svg width="46" height="52" viewBox="0 0 46 52" fill="none" stroke="#868686" strokeWidth="4" strokeLinejoin="round">
          <path d="M3 26 L41 3 V49 Z" />
        </svg>
      </button>
      <svg width="256" height="40" viewBox="0 0 256 40" className="absolute right-6 bottom-5">
        <defs>
          <linearGradient id="streak">
            <stop offset="0" stopColor="#000000" stopOpacity="0" />
            <stop offset="0.600" stopColor="#000000" stopOpacity="0.070" />
            <stop offset="0.850" stopColor="#000000" stopOpacity="0.250" />
            <stop offset="1" stopColor="#000000" stopOpacity="0.900" />
          </linearGradient>
          <linearGradient id="drip" x2="0" y2="1">
            <stop offset="0" stopColor="#000000" stopOpacity="0" />
            <stop offset="0.600" stopColor="#000000" stopOpacity="0.400" />
            <stop offset="1" stopColor="#000000" />
          </linearGradient>
        </defs>
        <path d="M0 12 H255 V14 H0 Z M0 20 H255 V22 H0 Z M0 33 H255 V35 H0 Z" fill="url(#streak)" />
        <path d="M68 2 H72 V36 H68 Z M82 2 H86 V36 H82 Z" fill="url(#drip)" />
        <path d="M70 37 H84" stroke="#000000" strokeWidth="1" />
        <path d="M98 8 V36 M114 8 V36" stroke="#000000" strokeOpacity="0.050" strokeWidth="2" />
      </svg>
    </nav>
  );
}

function App() {
  const [keyword, setKeyword] = useState("");
  const [followedOnly, setFollowedOnly] = useState(false);

  return (
    <div
      lang="zh-CN"
      className="flex h-screen flex-col overflow-hidden bg-[#f7f8fa] font-['Noto_Sans_CJK_SC',sans-serif]"
    >
      <StatusBar />
      <Header />
      <div className="mx-[45px] mt-11 flex h-[114px] shrink-0 items-center gap-4 rounded-[20px] bg-white px-9">
        <svg width="44" height="44" viewBox="0 0 44 44" fill="none" stroke="#b3b8c1" strokeWidth="4" strokeLinecap="round">
          <circle cx="19" cy="20" r="17" />
          <path d="M32 33 L40 41" />
        </svg>
        <input
          type="search"
          aria-label="搜索小区"
          placeholder="搜索小区查看成交"
          value={keyword}
          onChange={(e) => setKeyword(e.target.value)}
          className="min-w-0 flex-1 text-[39px] leading-[56px] text-[#333333] outline-none placeholder:text-[#b3b8c1]"
        />
      </div>
      <div className="mx-[45px] mt-[33px] flex h-[63px] shrink-0 items-center justify-between">
        <label htmlFor="followed" className="pt-2 text-[39px] leading-[56px] text-[#333333]">
          仅看我关注的小区
        </label>
        <input
          id="followed"
          type="checkbox"
          role="switch"
          checked={followedOnly}
          onChange={(e) => setFollowedOnly(e.target.checked)}
          className="h-[63px] w-[120px] appearance-none rounded-full border-3 border-[#c7c8ca] bg-[#dedfe3] before:block before:size-[57px] before:rounded-full before:bg-white before:shadow-md before:shadow-black/30 checked:bg-[#5bbb70] checked:before:ml-[57px]"
        />
      </div>
      <div className="mt-14 mb-[26px] grid shrink-0 grid-cols-5">
        {filters.map((name) => (
          <button
            key={name}
            type="button"
            className="flex items-center gap-[14px] pl-[45px] text-[39px] leading-[56px] text-[#333333]"
          >
            {name}
            <svg width="24" height="16" viewBox="0 0 24 16" className="mt-2">
              <path d="M2 0 H22 Q25 1 23 4 L14 14 Q12 16 10 14 L1 4 Q-1 1 2 0 Z" fill="#b4bec6" />
            </svg>
          </button>
        ))}
      </div>
      <main className="relative min-h-0 flex-1 overflow-hidden">
        <ul className="px-[45px]">
          {listings.map((item) => (
            <ListingCard key={item.name} item={item} />
          ))}
        </ul>
        <Watermark />
      </main>
      <FloatingActions />
      <SystemNav />
    </div>
  );
}

export default App;
